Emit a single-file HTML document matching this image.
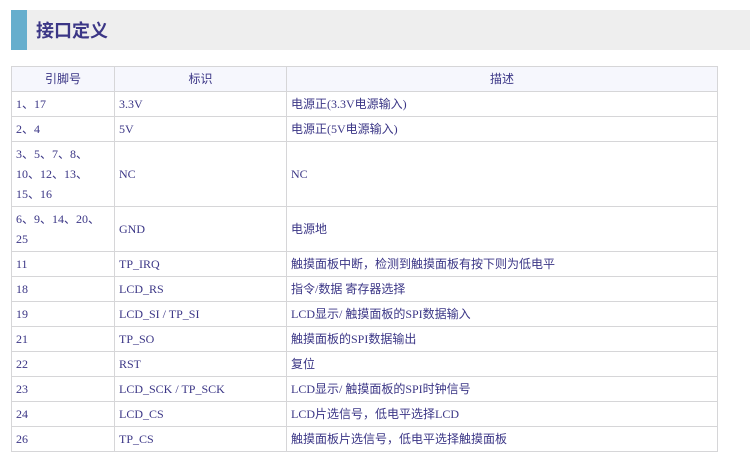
<!DOCTYPE html>
<html><head><meta charset="utf-8"><style>
body{margin:0;background:#fff;width:750px;height:457px;overflow:hidden;font-family:"Liberation Serif","Noto Sans CJK SC",serif;color:#3b3686;}
.hd{position:absolute;left:11px;top:10px;width:739px;height:40px;background:#eeeeee;}
.hd .b{position:absolute;left:0;top:0;width:16px;height:40px;background:#66aecd;}
.hd .t{position:absolute;left:25px;top:8px;font:bold 18px "Noto Sans CJK SC",sans-serif;color:#3b3686;line-height:24px;}
table{position:absolute;left:11px;top:66px;border-collapse:collapse;width:707px;font-size:12px;}
td,th{border:1px solid #d6d6d8;padding:0 0 0 4px;height:24px;text-align:left;line-height:20px;font-weight:normal;}
th{background:#f6f7fd;text-align:center;padding:0;font-family:"Noto Sans CJK SC",sans-serif;}
</style></head><body>
<div class="hd"><div class="b"></div><div class="t">接口定义</div></div>
<table>
<tr><th style="width:102px">引脚号</th><th style="width:171px">标识</th><th>描述</th></tr>
<tr><td>1、17</td><td>3.3V</td><td>电源正(3.3V电源输入)</td></tr>
<tr><td>2、4</td><td>5V</td><td>电源正(5V电源输入)</td></tr>
<tr><td style="height:64px">3、5、7、8、<br>10、12、13、<br>15、16</td><td>NC</td><td>NC</td></tr>
<tr><td style="height:44px">6、9、14、20、<br>25</td><td>GND</td><td>电源地</td></tr>
<tr><td>11</td><td>TP_IRQ</td><td>触摸面板中断，检测到触摸面板有按下则为低电平</td></tr>
<tr><td>18</td><td>LCD_RS</td><td>指令/数据 寄存器选择</td></tr>
<tr><td>19</td><td>LCD_SI / TP_SI</td><td>LCD显示/ 触摸面板的SPI数据输入</td></tr>
<tr><td>21</td><td>TP_SO</td><td>触摸面板的SPI数据输出</td></tr>
<tr><td>22</td><td>RST</td><td>复位</td></tr>
<tr><td>23</td><td>LCD_SCK / TP_SCK</td><td>LCD显示/ 触摸面板的SPI时钟信号</td></tr>
<tr><td>24</td><td>LCD_CS</td><td>LCD片选信号，低电平选择LCD</td></tr>
<tr><td>26</td><td>TP_CS</td><td>触摸面板片选信号，低电平选择触摸面板</td></tr>
</table>
</body></html>
